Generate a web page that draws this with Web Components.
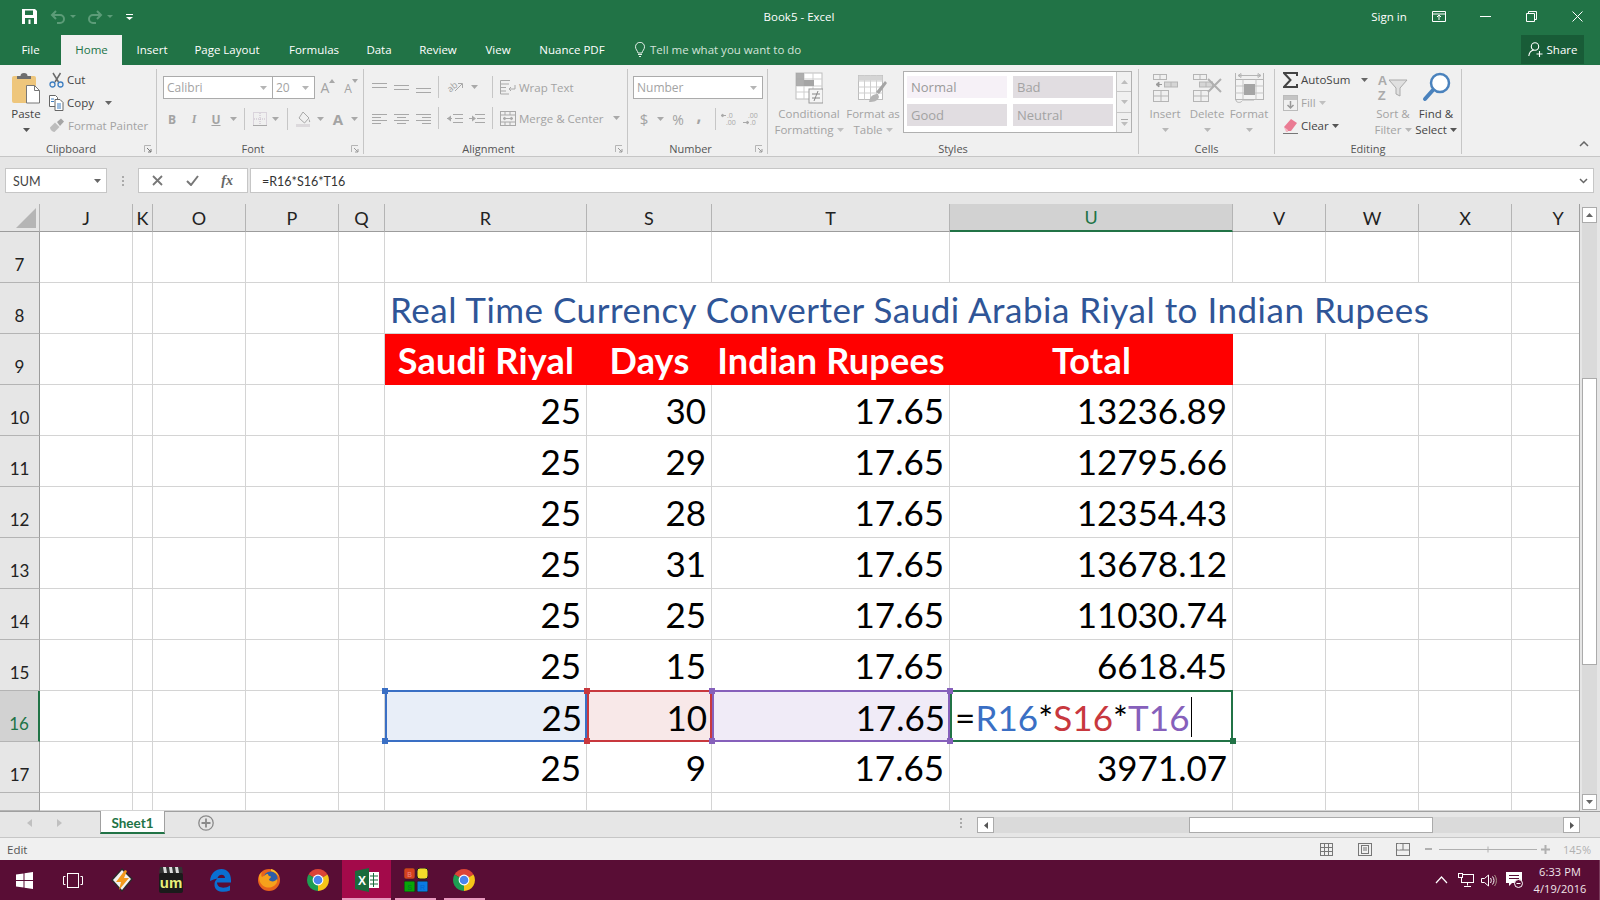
<!DOCTYPE html>
<html>
<head>
<meta charset="utf-8">
<title>Book5 - Excel</title>
<style>
  html, body { margin: 0; height: 100%; overflow: hidden; background: #fff; }
  body { font-family: "Open Sans", "Liberation Sans", sans-serif; }
</style>
</head>
<body>
<xl-app></xl-app>
<script>
const ic = (w, h, body) => `<svg width="${w}" height="${h}" viewBox="0 0 ${w} ${h}" fill="none" style="display:block">${body}</svg>`;
const car = (c = '#a9a9a9') => ic(7, 4, `<path d="M0 0h7L3.5 4z" fill="${c}"/>`);
const G = '#a8a8a8';

function shadow(el, html) {
    const template = document.createElement('template');
    template.innerHTML = html;
    el.attachShadow({ mode: 'open' }).appendChild(template.content.cloneNode(true));
}

class XlTitlebar extends HTMLElement {
    constructor() {
        super();
        shadow(this, `
        <style>
          :host { display: flex; height: 35px; box-sizing: border-box; padding-bottom: 2px; background: #217346; color: #fff; font-size: 11.500px; align-items: center; }
          .qat { display: flex; align-items: center; width: 400px; padding-left: 22px; box-sizing: border-box; flex: none; }
          .title { width: 798px; text-align: center; flex: none; }
          .right { display: flex; align-items: center; justify-content: flex-end; flex: 1; }
          .signin { width: 70px; margin-right: -8px; text-align: center; }
          .ctl { width: 46px; display: flex; justify-content: center; }
        </style>
        <div class="qat">
          ${ic(15, 15, '<path d="M0 0h13l2 2v13H0z" fill="#fff"/><rect x="3" y="1.5" width="8" height="4.5" fill="#217346"/><rect x="3" y="9" width="9" height="6" fill="#217346"/><rect x="6.5" y="10.5" width="2" height="4.5" fill="#fff"/>')}
          <span style="width:13px"></span>
          ${ic(16, 14, '<path d="M6 1L2 5l4 4M2 5h8a3.8 3.8 0 0 1 0 8H7" stroke="#5c9c78" stroke-width="2"/>')}
          <span style="width:4px"></span>${ic(6, 3, '<path d="M0 0h6L3 3z" fill="#5c9c78"/>')}
          <span style="width:11px"></span>
          ${ic(16, 14, '<path d="M10 1l4 4-4 4M14 5H6a3.8 3.8 0 0 0 0 8h3" stroke="#5c9c78" stroke-width="2"/>')}
          <span style="width:4px"></span>${ic(6, 3, '<path d="M0 0h6L3 3z" fill="#5c9c78"/>')}
          <span style="width:13px"></span>
          ${ic(7, 6, '<path d="M0 0h7v1H0zM0 3h7L3.5 6z" fill="#fff"/>')}
        </div>
        <div class="title">Book5 - Excel</div>
        <div class="right">
          <span class="signin">Sign in</span>
          <span class="ctl">${ic(14, 11, '<path d="M.5.5h13v10H.5zM.5 3h13M7 9V4.5M5 6l2-2 2 2" stroke="#fff"/>')}</span>
          <span class="ctl">${ic(11, 1, '<path d="M0 .5h11" stroke="#fff"/>')}</span>
          <span class="ctl">${ic(11, 11, '<path d="M.5 2.5h8v8h-8zM2.5 2.5v-2h8v8h-2" stroke="#fff"/>')}</span>
          <span class="ctl">${ic(11, 11, '<path d="M.5.5l10 10M10.5.5l-10 10" stroke="#fff"/>')}</span>
        </div>`);
    }
}

class XlTabs extends HTMLElement {
    constructor() {
        super();
        const tabs = [['File', 61], ['Home', 61, 1], ['Insert', 60], ['Page Layout', 90], ['Formulas', 84], ['Data', 46], ['Review', 72], ['View', 48], ['Nuance PDF', 100]];
        shadow(this, `
        <style>
          :host { display: flex; height: 30px; background: #217346; color: #fff; font-size: 11.500px; }
          .t { display: flex; align-items: center; justify-content: center; height: 30px; box-sizing: border-box; padding-bottom: 1px; }
          .on { background: #f0f0f0; color: #217346; }
          .tell { display: flex; align-items: center; gap: 5px; margin-left: 13px; padding-bottom: 2px; box-sizing: border-box; color: #d3e3da; flex: 1; }
          .share { width: 63px; height: 29px; background: #185c37; display: flex; align-items: center; justify-content: center; gap: 4px; margin-right: 16px; }
        </style>
        ${tabs.map(([n, w, on]) => `<div class="t ${on ? 'on' : ''}" style="width:${w}px">${n}</div>`).join('')}
        <div class="tell">
          ${ic(10, 15, '<path d="M3 11C2.500 8.500 .5 7.500 .5 4.800a4.500 4.500 0 0 1 9 0C9.500 7.500 7.500 8.500 7 11zM3 12.500h4M4 14.500h2" stroke="#e4eee8"/>')}
          <span>Tell me what you want to do</span>
        </div>
        <div class="share">
          ${ic(15, 15, '<circle cx="7" cy="4.500" r="3.700" stroke="#fff" stroke-width="1.100"/><path d="M.8 14c.4-3.500 2.500-5.500 5-6M11.500 9v6M8.500 12h6" stroke="#fff" stroke-width="1.100"/>')}
          <span>Share</span>
        </div>`);
    }
}

class XlGroup extends HTMLElement {
    constructor() {
        super();
        shadow(this, `
        <style>
          :host { display: flex; flex-direction: column; height: 85px; box-sizing: border-box; border-right: 1px solid #c6c6c6; flex: none; color: #444; }
          .body { height: 74px; display: flex; }
          .label { height: 11px; display: flex; align-items: center; justify-content: center; position: relative; color: #555; font-size: 11px; line-height: 11px; margin-left: var(--lm, 0); }
          .launch { position: absolute; right: 4px; top: 2px; }
          :host([launcher]) .label { padding-right: 14px; }
        </style>
        <div class="body"><slot></slot></div>
        <div class="label"><span id="l"></span><span class="launch" id="k"></span></div>`);
    }
    connectedCallback() {
        this.shadowRoot.querySelector('#l').textContent = this.getAttribute('label');
        if (this.hasAttribute('launcher')) {
            const c = this.getAttribute('launcher') || '#9a9a9a';
            this.shadowRoot.querySelector('#k').innerHTML = ic(8, 8, `<path d="M.5 7V.5H7" stroke="#b5b5b5"/><path d="M3 3l4 4M7 4v3H4" stroke="${c}"/>`);
        }
    }
}

class XlRibbon extends HTMLElement {
    constructor() {
        super();
        const i = (w, c = '', s = '') => `<span class="i" style="width:${w}px;${s}">${c}</span>`;
        const sep = (ml, mr) => `<span class="sep" style="margin:0 ${mr}px 0 ${ml}px"></span>`;
        const lines = (a) => ic(15, 13, a.map(([y, x1, x2]) => `<path d="M${x1} ${y}.5H${x2}" stroke="${G}"/>`).join(''));
        const big = (w, icon, l1, l2, dark) => `<div class="big ${dark ? 'dark' : ''}" style="width:${w}px"><span class="bi">${icon}</span><span class="tl">${l1}</span><span class="tl">${l2}</span></div>`;
        const tbl = '<rect x=".5" y=".5" width="13" height="5" stroke="#b5b5b5"/><path d="M7 .5v5" stroke="#b5b5b5"/>';
        shadow(this, `
        <style>
          :host { display: flex; height: 92px; box-sizing: border-box; padding-top: 4px; background: #f0f0f0; border-bottom: 1px solid #c6c6c6; font-size: 11.500px; color: #444; }
          .i { display: inline-flex; align-items: center; justify-content: center; flex: none; }
          .row { display: flex; align-items: center; }
          .col { display: flex; flex-direction: column; }
          .sm { height: 23px; display: flex; align-items: center; gap: 3px; white-space: nowrap; }
          .gr { color: #a3a3a3; }
          .drk { color: #444; }
          .sep { width: 1px; height: 22px; background: #c6c6c6; flex: none; }
          .box { background: #fff; border: 1px solid #ababab; height: 23px; box-sizing: border-box; display: flex; align-items: center; justify-content: space-between; padding: 0 5px 0 3px; color: #a3a3a3; font-size: 12px; flex: none; }
          .big { display: flex; flex-direction: column; align-items: center; color: #a3a3a3; flex: none; white-space: nowrap; }
          .big.dark { color: #444; }
          .bi { height: 37px; display: flex; align-items: center; justify-content: center; }
          .tl { height: 16px; line-height: 16px; display: flex; align-items: center; gap: 3px; }
          .gal { width: 229px; height: 62px; margin: 2px 0 0 7px; box-sizing: border-box; border: 1px solid #b0b0b0; background: #fff; display: flex; flex: none; }
          .cells { display: grid; grid-template-columns: 100px 100px; grid-template-rows: 22px 22px; gap: 6px; padding: 4px 3px; flex: 1; }
          .cells span { display: flex; align-items: center; padding-left: 4px; background: #e1dde1; color: #a3a3a3; font-size: 13px; }
          .cells span.n { background: #f6f1f7; color: #9a9a9a; }
          .gs { width: 15px; display: flex; flex-direction: column; background: #f0f0f0; border-left: 1px solid #c6c6c6; }
          .gs span { flex: 1; display: flex; align-items: center; justify-content: center; border-bottom: 1px solid #c6c6c6; }
          .gs span:last-child { border-bottom: 0; }
          .collapse { flex: 1; display: flex; align-items: flex-end; justify-content: flex-end; padding: 0 11px 6px 0; height: 84px; box-sizing: border-box; }
          .grow { display: flex; align-items: flex-start; color: #a3a3a3; }
          .az { display: flex; flex-direction: column; font-family: "Liberation Sans", sans-serif; font-weight: 700; font-size: 13px; line-height: 15px; color: #aaa; }
          .orient { display: flex; align-items: center; width: 18px; height: 15px; color: #a3a3a3; }
          .orient span { display: block; font-size: 9px; line-height: 10px; transform: rotate(-40deg); margin-right: -3px; }
        </style>

        <xl-group label="Clipboard" launcher="#777" style="width:157px">
          <div class="col" style="width:48px;align-items:center;padding-left:2px">
            <span style="height:36px;display:flex;align-items:center;margin-top:1px">${ic(30, 31, '<rect x="1" y="3" width="24" height="27" rx="2" fill="#eec67c"/><path d="M6 6V3h3.500a3.500 3 0 0 1 7 0H20v3z" fill="#6e6e6e"/><path d="M15.500 12.500h8l5 5v12.500h-13z" fill="#fff" stroke="#777"/><path d="M23.500 12.500v5h5" stroke="#777"/>')}</span>
            <span class="tl drk">Paste</span>
            <span class="tl">${car('#555')}</span>
          </div>
          <div class="col" style="margin:-1px 0 0 -1px">
            <div class="sm">${ic(15, 16, '<path d="M4 1l5.500 9M11.500 1L6 10" stroke="#6a6a6a" stroke-width="1.500"/><circle cx="3.500" cy="12.500" r="2.500" stroke="#3f7fc1" stroke-width="1.300"/><circle cx="11.500" cy="12.500" r="2.500" stroke="#3f7fc1" stroke-width="1.300"/>')}<span>Cut</span></div>
            <div class="sm">${ic(15, 16, '<path d="M.5.5h6l2 2v9H.5z" fill="#fff" stroke="#666"/><path d="M6 4.500h5l3 3v8H6z" fill="#fff" stroke="#666"/><path d="M2 4h3M2 6.500h3M8 9h4M8 11h4M8 13h4" stroke="#3f7fc1"/>')}<span>Copy</span><span style="margin-left:8px">${car('#666')}</span></div>
            <div class="sm gr">${ic(16, 15, '<path d="M1 9.500l5-5 4.500 4.500-5 5c-1 0-4-1-4.500-4.500z" fill="#bdbdbd"/><path d="M8 4l4-3.500 3 3L11 8z" fill="#a5a5a5"/>')}<span>Format Painter</span></div>
          </div>
        </xl-group>

        <xl-group label="Font" launcher style="width:207px">
          <div class="col" style="padding-top:7px">
            <div class="row" style="margin-left:6px">
              <span class="box" style="width:110px"><span>Calibri</span>${car('#b5b5b5')}</span>
              <span class="box" style="width:43px;margin-left:-1px"><span>20</span>${car('#b5b5b5')}</span>
              ${i(24, `<span class="grow"><span style="font-size:14px;line-height:18px">A</span>${ic(6, 4, `<path d="M0 4l3-4 3 4z" fill="${G}"/>`)}</span>`, 'margin-left:1px')}
              ${i(22, `<span class="grow"><span style="font-size:12px;line-height:16px;margin-top:2px">A</span>${ic(6, 4, `<path d="M0 0h6L3 4z" fill="${G}"/>`)}</span>`)}
            </div>
            <div class="row" style="margin-top:8px;height:24px;margin-left:4px">
              ${i(22, '<b style="color:#a3a3a3;font-size:12px">B</b>')}
              ${i(22, '<i style="color:#a3a3a3;font-size:12px;font-family:Liberation Serif;font-weight:700">I</i>')}
              ${i(22, '<u style="color:#a3a3a3;font-size:12px;font-weight:700">U</u>')}
              ${i(13, car())}${sep(4, 7)}
              ${i(16, ic(14, 14, `<rect x=".5" y=".5" width="13" height="13" stroke="#c4b9c8" stroke-dasharray="1 1"/><path d="M7 1v12M1 7h12" stroke="#c4b9c8" stroke-dasharray="1 1"/><path d="M0 13.500h14" stroke="${G}"/>`))}
              ${i(14, car())}${sep(5, 7)}
              ${i(17, ic(16, 16, `<path d="M7 1l6 6-4.500 5L3 7z" stroke="${G}"/><path d="M13 8c1 1.500 1.500 2.500 1 3s-1.500 0-1-3z" fill="${G}"/><rect y="13" width="14" height="3" fill="#dcd9dc"/>`))}
              ${i(14, car(), 'margin-left:1px')}
              ${i(18, `<span style="font-weight:700;color:#a3a3a3;font-size:15px;line-height:15px">A</span>`, 'margin-left:2px')}
              ${i(14, car())}
            </div>
          </div>
        </xl-group>

        <xl-group label="Alignment" launcher style="width:264px">
          <div class="col" style="padding:4px 0 0 8px">
            <div class="row" style="height:24px;margin-top:2px">
              ${i(15, lines([[2, 0, 15], [6, 0, 15]]))}<span style="width:7px"></span>
              ${i(15, lines([[4, 0, 15], [8, 0, 15]]))}<span style="width:7px"></span>
              ${i(15, lines([[7, 0, 15], [11, 0, 15]]))}${sep(7, 8)}
              <span class="orient"><span>ab</span>${ic(8, 10, `<path d="M0 9l7-7M3 1.500h4.500V6" stroke="${G}"/>`)}</span>
              ${i(14, car(), 'margin-left:2px')}<span class="sep" style="margin:0 7px 0 11px"></span>
              ${i(16, ic(16, 15, `<path d="M.5.5H10M.5 4H9M.5 7.500H6M.5 11H6M.5.500v13.500H9" stroke="${G}"/><path d="M15 5v4H9M11 7L9 9l2 2" stroke="${G}"/>`))}
              <span class="gr" style="margin-left:3px;white-space:nowrap">Wrap Text</span>
            </div>
            <div class="row" style="height:24px;margin-top:7px">
              ${i(15, lines([[2, 0, 15], [5, 0, 9], [8, 0, 15], [11, 0, 9]]))}<span style="width:7px"></span>
              ${i(15, lines([[2, 0, 15], [5, 3, 12], [8, 0, 15], [11, 3, 12]]))}<span style="width:7px"></span>
              ${i(15, lines([[2, 0, 15], [5, 6, 15], [8, 0, 15], [11, 6, 15]]))}${sep(7, 8)}
              ${i(16, ic(16, 13, `<path d="M6 2.500h10M8 6.500h8M6 10.500h10M0 6.500h5" stroke="${G}"/><path d="M0 6.500l4-3v6z" fill="${G}"/>`))}<span style="width:6px"></span>
              ${i(16, ic(16, 13, `<path d="M6 2.500h10M8 6.500h8M6 10.500h10M0 6.500h5" stroke="${G}"/><path d="M7 6.500l-4-3v6z" fill="${G}"/>`))}<span class="sep" style="margin:0 7px 0 7px"></span>
              ${i(16, ic(16, 15, `<rect x=".5" y=".5" width="15" height="14" stroke="${G}"/><path d="M.5 4h15M.5 11h15M5 .5V4M10 .5V4M5 11v3M10 11v3M3 7.500h10M3 7.500l2-1.500v3zM13 7.500l-2-1.500v3z" stroke="${G}"/>`))}
              <span class="gr" style="margin-left:3px;white-space:nowrap">Merge &amp; Center</span>
              ${i(12, car(), 'margin-left:7px')}
            </div>
          </div>
        </xl-group>

        <xl-group label="Number" launcher style="width:140px">
          <div class="col" style="padding:7px 0 0 5px">
            <span class="box" style="width:130px"><span>Number</span>${car('#b5b5b5')}</span>
            <div class="row" style="margin-top:8px;height:24px">
              ${i(18, '<span style="color:#a3a3a3;font-size:15px">$</span>', 'margin-left:2px')}
              ${i(14, car())}
              ${i(22, '<span style="color:#a3a3a3;font-size:14px">%</span>')}
              ${i(20, '<b style="color:#a3a3a3;font-size:17px;margin-top:-8px">,</b>')}
              ${sep(6, 5)}
              ${i(19, ic(19, 17, `<text x="6" y="7" font-size="7" font-family="Open Sans" fill="${G}">.0</text><text x="5" y="14" font-size="7" font-family="Open Sans" fill="${G}">.00</text><path d="M0 4.500h5M0 4.500l2-1.500v3z" stroke="${G}"/>`))}
              ${i(19, ic(19, 17, `<text x="6" y="7" font-size="7" font-family="Open Sans" fill="${G}">.00</text><text x="8" y="14" font-size="7" font-family="Open Sans" fill="${G}">.0</text><path d="M1 11.500h6M7 11.500l-2-1.500v3z" stroke="${G}"/>`), 'margin-left:2px')}
            </div>
          </div>
        </xl-group>

        <xl-group label="Styles" style="width:371px">
          ${big(82, ic(28, 32, `<rect x="1" y="1" width="26" height="26" fill="#fff" stroke="#bdbdbd"/><path d="M1 7h26M1 14h26M1 20h26M9 1v26M18 1v26" stroke="#cfcfcf"/><rect x="1" y="1" width="8" height="13" fill="#a5a5a5" opacity=".9"/><rect x="9" y="8" width="10" height="6" fill="#a5a5a5"/><rect x="14" y="17" width="14" height="14" fill="#f5f5f5" stroke="#9a9a9a"/><path d="M17 22h8M17 26h8M23 19l-4 10" stroke="#888"/>`), 'Conditional', `Formatting ${car('#c0c0c0')}`)}
          ${big(46, ic(30, 30, `<rect x=".5" y="2.500" width="24" height="24" fill="#fff" stroke="#bdbdbd"/><path d="M.5 8h24M.5 14h24M.5 20h24M6.500 2.500v24M12.500 2.500v24M18.500 2.500v24" stroke="#cfcfcf"/><rect x=".5" y="2.500" width="24" height="5" fill="#d5d5d5"/><path d="M18 19l9-11 2 2-8 11z" fill="#a5a5a5"/><path d="M11 29c1-6 4-8 9-8l1 3c-1 4-5 5-10 5z" fill="#b5b5b5"/>`), 'Format as', `Table ${car('#c0c0c0')}`)}
          <div class="gal">
            <div class="cells"><span class="n">Normal</span><span>Bad</span><span>Good</span><span>Neutral</span></div>
            <div class="gs">
              <span>${ic(7, 4, '<path d="M0 4h7L3.500 0z" fill="#bdbdbd"/>')}</span>
              <span>${ic(7, 4, '<path d="M0 0h7L3.500 4z" fill="#bdbdbd"/>')}</span>
              <span>${ic(7, 7, '<path d="M0 .5h7" stroke="#aaa"/><path d="M0 3h7L3.500 7z" fill="#bdbdbd"/>')}</span>
            </div>
          </div>
        </xl-group>

        <xl-group label="Cells" style="width:136px;padding-left:5px;--lm:-5px">
          ${big(42, ic(26, 30, `${'<g transform="translate(1 1)">' + tbl + '</g><g transform="translate(12 8.500)">' + tbl.replace(/stroke="#b5b5b5"/g, 'stroke="#b5b5b5" fill="#d5d5d5"') + '</g><g transform="translate(1 17)"><rect x=".5" y=".5" width="15" height="11" stroke="#b5b5b5"/><path d="M8 .5v11M.5 6h15" stroke="#b5b5b5"/></g><path d="M10 11.500H4M4 11.500l3-2.500v5z" fill="#999" stroke="#999"/>'}`), 'Insert', car('#b8b8b8'))}
          ${big(42, ic(31, 30, `${'<g transform="translate(1 1)">' + tbl + '</g><g transform="translate(7 8.500)">' + tbl.replace(/stroke="#b5b5b5"/g, 'stroke="#b5b5b5" fill="#d5d5d5"') + '</g><g transform="translate(1 17)"><rect x=".5" y=".5" width="15" height="11" stroke="#b5b5b5"/><path d="M8 .5v11M.5 6h15" stroke="#b5b5b5"/></g><path d="M16 6l13 13M29 6L16 19" stroke="#b0b0b0" stroke-width="2"/>'}`), 'Delete', car('#b8b8b8'))}
          ${big(42, ic(29, 32, `<path d="M.5 1v6M28.500 1v6M3 3.500h23M3 3.500l3-2v4zM26 3.500l-3-2v4z" stroke="#b5b5b5"/><rect x=".5" y="7.500" width="28" height="20" fill="#f4f4f4" stroke="#b5b5b5"/><path d="M8 7.500v20M21 7.500v20M.5 14h28M.5 21h28" stroke="#c5c5c5"/><rect x="9" y="12" width="11" height="11" fill="#a5a5a5"/><path d="M1 28c0 3 5 3 6 1M7 28l12 0" stroke="#b5b5b5"/>`), 'Format', car('#b8b8b8'))}
        </xl-group>

        <xl-group label="Editing" style="width:187px">
          <div class="col" style="width:97px;padding-left:8px;box-sizing:border-box;margin-top:-1px">
            <div class="sm">${ic(15, 16, '<path d="M14 4V1H1l6.500 7L1 15h13v-3" stroke="#444" stroke-width="2"/>')}<span>AutoSum</span><span style="margin-left:8px">${car('#666')}</span></div>
            <div class="sm gr">${ic(15, 16, `<rect x=".5" y=".5" width="14" height="15" stroke="#bbb"/><rect x="1" y="1" width="13" height="4" fill="#c4c4c4"/><path d="M7.500 6v7M4.500 10l3 3 3-3" stroke="#999" stroke-width="1.500"/>`)}<span>Fill</span>${car('#c0c0c0')}</div>
            <div class="sm">${ic(15, 16, '<path d="M1 9l7-8 6 4-6 8H4z" fill="#ea7b93"/><path d="M1 9l4 3v2H3z" fill="#f4b9c4"/><path d="M0 15.500h15" stroke="#777"/>')}<span>Clear</span>${car('#555')}</div>
          </div>
          ${big(42, `<span style="display:flex;align-items:center;gap:1px"><span class="az"><span>A</span><span>Z</span></span>${ic(20, 18, '<path d="M1 1h18l-7 8v8l-4-2V9z" fill="#e0e0e0" stroke="#aaa"/>')}</span>`, 'Sort &amp;', `Filter ${car('#b8b8b8')}`)}
          ${big(44, ic(29, 31, `<circle cx="18" cy="11" r="9" fill="#fff" stroke="#4a82bd" stroke-width="2.500"/><path d="M11 18l-8 9" stroke="#4a82bd" stroke-width="4" stroke-linecap="round"/>`), 'Find &amp;', `Select ${car('#555')}`, true)}
        </xl-group>

        <div class="collapse">${ic(10, 6, '<path d="M1 5l4-4 4 4" stroke="#666" stroke-width="1.500"/>')}</div>`);
    }
}

class XlFormulaBar extends HTMLElement {
    constructor() {
        super();
        shadow(this, `
        <style>
          :host { display: flex; height: 47px; box-sizing: border-box; padding: 11px 6px 11px 5px; background: #e6e6e6; font-family: Lato, sans-serif; font-size: 12.500px; color: #444; }
          .b { background: #fff; border: 1px solid #c6c6c6; box-sizing: border-box; height: 25px; padding-top: 1px; display: flex; align-items: center; flex: none; }
          .name { width: 102px; padding: 1px 5px 0 7px; justify-content: space-between; }
          .dots { width: 31px; display: flex; justify-content: center; align-items: center; }
          .fx { width: 110px; justify-content: space-between; padding: 0 14px 0 13px; }
          .in { flex: 1; margin-left: 2px; padding: 1px 5px 0 11px; justify-content: space-between; color: #333; }
          i { font-family: "Liberation Serif", serif; font-size: 14px; color: #666; font-weight: 700; }
        </style>
        <div class="b name"><span>SUM</span>${car('#666')}</div>
        <div class="dots">${ic(2, 10, '<path d="M0 0h2v2H0zM0 4h2v2H0zM0 8h2v2H0z" fill="#aaa"/>')}</div>
        <div class="b fx">
          ${ic(11, 11, '<path d="M1 1l9 9M10 1l-9 9" stroke="#777" stroke-width="1.800"/>')}
          ${ic(13, 11, '<path d="M1 6l4 4 7-9" stroke="#777" stroke-width="2"/>')}
          <i>fx</i>
        </div>
        <div class="b in"><span>=R16*S16*T16</span>${ic(9, 6, '<path d="M1 1l3.500 3.500L8 1" stroke="#666" stroke-width="1.500"/>')}</div>`);
    }
}

class XlSheet extends HTMLElement {
    constructor() {
        super();
        const cols = ['J', 'K', 'O', 'P', 'Q', 'R', 'S', 'T', 'U', 'V', 'W', 'X', 'Y'];
        const days = { 10: 30, 11: 29, 12: 28, 13: 31, 14: 25, 15: 15, 16: 10, 17: 9 };
        const totals = { 10: '13236.89', 11: '12795.66', 12: '12354.43', 13: '13678.12', 14: '11030.74', 15: '6618.45', 17: '3971.07' };
        const knob = (pos, color) => `<s class="k ${pos}" style="background:${color}"></s>`;
        let cells = '<div class="h corner">' + ic(20, 20, '<path d="M20 0v20H0z" fill="#b5b5b5"/>') + '</div>';
        cols.forEach(c => { cells += `<div class="h ${c === 'U' ? 'sel' : ''}">${c}</div>`; });
        for (let r = 7; r <= 18; r++) {
            cells += `<div class="rh ${r === 16 ? 'rsel' : ''}">${r === 18 ? '' : r}</div>`;
            if (r === 8) {
                cols.slice(0, 5).forEach(() => { cells += '<div class="c"></div>'; });
                cells += '<div class="c title" style="grid-column: span 7">Real Time Currency Converter Saudi Arabia Riyal to Indian Rupees</div><div class="c"></div>';
                continue;
            }
            cols.forEach(c => {
                if (r === 9 && 'RSTU'.includes(c)) {
                    const t = { R: 'Saudi Riyal', S: 'Days', T: 'Indian Rupees', U: 'Total' }[c];
                    cells += `<div class="c red">${t}</div>`;
                } else if (days[r] && c === 'R') {
                    cells += `<div class="c num ${r === 16 ? 'hl hr' : ''}">25${r === 16 ? knob('tl', '#3a6fc4') + knob('bl', '#3a6fc4') : ''}</div>`;
                } else if (days[r] && c === 'S') {
                    cells += `<div class="c num ${r === 16 ? 'hl hs' : ''}">${days[r]}${r === 16 ? knob('tl', '#c8383e') + knob('bl', '#c8383e') : ''}</div>`;
                } else if (days[r] && c === 'T') {
                    cells += `<div class="c num ${r === 16 ? 'hl ht' : ''}">17.65${r === 16 ? knob('tl', '#8660bb') + knob('bl', '#8660bb') + knob('tr', '#8660bb') + knob('br', '#8660bb') : ''}</div>`;
                } else if (days[r] && c === 'U') {
                    if (r === 16) {
                        cells += '<div class="c num hl edit"><span class="f"><span>=</span><span style="color:#3a6fc4">R16</span><span>*</span><span style="color:#c8383e">S16</span><span>*</span><span style="color:#8660bb">T16</span></span><span class="caret"></span>' + knob('br', '#217346') + '</div>';
                    } else {
                        cells += `<div class="c num">${totals[r]}</div>`;
                    }
                } else {
                    cells += '<div class="c"></div>';
                }
            });
        }
        shadow(this, `
        <style>
          :host { display: flex; height: 607px; background: #e6e6e6; }
          .grid { display: grid; width: 1580px; flex: none; grid-template-columns: 40px 93px 20px 93px 93px 46px 202px 125px 238px 283px 93px 93px 93px 93px; grid-template-rows: 28px repeat(11, 51px) 18px; font-family: Lato, sans-serif; overflow: hidden; border-right: 1px solid #a0a0a0; box-sizing: border-box; }
          .h { background: #e6e6e6; border-bottom: 1px solid #9c9c9c; border-right: 1px solid #b4b4b4; display: flex; align-items: center; justify-content: center; font-size: 18px; color: #222; box-sizing: border-box; }
          .corner { justify-content: flex-end; align-items: flex-start; padding: 4px 3px 0 0; }
          .sel { background: #d2d2d2; color: #217346; border-bottom: 2px solid #217346; }
          .rh { background: #e6e6e6; border-bottom: 1px solid #b4b4b4; border-right: 1px solid #9c9c9c; display: flex; align-items: flex-end; justify-content: center; box-sizing: border-box; font-size: 17px; line-height: 17px; padding-bottom: 9px; color: #222; }
          .rsel { color: #217346; background: #d2d2d2; border-right: 2px solid #217346; }
          .c { background: #fff; border-right: 1px solid #d4d4d4; border-bottom: 1px solid #d4d4d4; box-sizing: border-box; position: relative; white-space: nowrap; }
          .num { display: flex; align-items: flex-end; justify-content: flex-end; font-size: 35px; line-height: 35px; padding: 0 5px 7px 0; color: #000; }
          .title { display: flex; align-items: flex-end; padding: 0 0 6px 5px; font-size: 35px; line-height: 35px; color: #2f5597; letter-spacing: .5px; }
          .red { background: #f00; border: 0; color: #fff; font-size: 36px; line-height: 36px; letter-spacing: .2px; font-weight: 700; display: flex; align-items: flex-end; justify-content: center; padding-bottom: 7px; }
          .hl { border: 0; background: var(--f); }
          .hl::after { content: ""; position: absolute; inset: -1px 0 0 0; border: 2px solid var(--b); z-index: 1; pointer-events: none; }
          .hr { --b: #3a6fc4; --f: #e8eef8; }
          .hs { --b: #c8383e; --f: #f8e8e8; }
          .ht { --b: #8660bb; --f: #f0ebf7; }
          .edit { --b: #217346; --f: #fff; justify-content: flex-start; padding-left: 5px; }
          .f { display: flex; letter-spacing: .1px; }
          .caret { width: 1px; height: 40px; background: #000; align-self: flex-end; margin: 0 0 -2px 1px; }
          .k { position: absolute; width: 6px; height: 6px; z-index: 2; }
          .tl { left: -3px; top: -3px; } .bl { left: -3px; bottom: -2px; }
          .tr { right: -3px; top: -3px; } .br { right: -3px; bottom: -2px; }
          .sb { flex: 1; display: flex; flex-direction: column; padding: 3px 3px 1px 2px; }
          .btn { height: 14px; background: #fff; border: 1px solid #ababab; box-sizing: content-box; display: flex; align-items: center; justify-content: center; flex: none; }
          .track { flex: 1; background: #dadada; display: flex; flex-direction: column; }
          .thumb { height: 287px; margin-top: 155px; background: #fff; border: 1px solid #ababab; box-sizing: border-box; }
        </style>
        <div class="grid">${cells}</div>
        <div class="sb">
          <div class="btn">${ic(7, 4, '<path d="M0 4h7L3.500 0z" fill="#666"/>')}</div>
          <div class="track"><div class="thumb"></div></div>
          <div class="btn">${ic(7, 4, '<path d="M0 0h7L3.500 4z" fill="#666"/>')}</div>
        </div>`);
    }
}

class XlSheetTabs extends HTMLElement {
    constructor() {
        super();
        shadow(this, `
        <style>
          :host { display: flex; align-items: flex-start; height: 27px; box-sizing: border-box; background: #e6e6e6; border-top: 1px solid #a0a0a0; border-bottom: 1px solid #c6c6c6; font-family: Lato, sans-serif; }
          .nav { width: 100px; height: 22px; display: flex; align-items: center; padding-left: 27px; gap: 25px; box-sizing: border-box; }
          .tab { width: 65px; height: 23px; padding-top: 2px; box-sizing: border-box; background: #fff; border: 1px solid #a0a0a0; border-top: 0; border-bottom: 2px solid #217346; color: #217346; font-weight: 700; font-size: 13.500px; display: flex; align-items: center; justify-content: center; margin-top: -1px; }
          .add { width: 16px; height: 16px; margin: 3px 0 0 33px; }
          .dots { margin: 6px 0 0 746px; width: 6px; }
          .hs { display: flex; width: 603px; height: 16px; margin: 5px 0 0 11px; background: #dadada; }
          .b { width: 15px; height: 14px; background: #fff; border: 1px solid #ababab; display: flex; align-items: center; justify-content: center; flex: none; }
          .thumb { width: 242px; height: 14px; background: #fff; border: 1px solid #ababab; margin-left: 195px; flex: none; }
        </style>
        <div class="nav">
          ${ic(5, 8, '<path d="M5 0v8L0 4z" fill="#c0c0c0"/>')}
          ${ic(5, 8, '<path d="M0 0v8l5-4z" fill="#c0c0c0"/>')}
        </div>
        <div class="tab">Sheet1</div>
        <div class="add">${ic(16, 16, '<circle cx="8" cy="8" r="7.200" stroke="#8a8a8a" stroke-width="1.300"/><path d="M8 3.500v9M3.500 8h9" stroke="#8a8a8a" stroke-width="1.800"/>')}</div>
        <div class="dots">${ic(2, 10, '<path d="M0 0h2v2H0zM0 4h2v2H0zM0 8h2v2H0z" fill="#aaa"/>')}</div>
        <div class="hs">
          <span class="b">${ic(4, 7, '<path d="M4 0v7L0 3.500z" fill="#555"/>')}</span>
          <span class="thumb"></span>
          <span class="b" style="margin-left:auto">${ic(4, 7, '<path d="M0 0v7l4-3.500z" fill="#555"/>')}</span>
        </div>`);
    }
}

class XlStatus extends HTMLElement {
    constructor() {
        super();
        shadow(this, `
        <style>
          :host { display: flex; align-items: center; height: 22px; background: #f0f0f0; font-size: 11.500px; color: #555; padding-left: 7px; box-sizing: border-box; }
          .v { display: flex; align-items: center; margin-left: auto; padding-right: 9px; }
          .g { color: #b0b0b0; margin-left: 13px; font-size: 11px; }
        </style>
        <span>Edit</span>
        <div class="v">
          ${ic(13, 13, '<rect x=".5" y=".5" width="12" height="12" stroke="#777"/><path d="M4.500 .5v12M8.500 .5v12M.5 4.500h12M.5 8.500h12" stroke="#777"/>')}
          <span style="width:25px"></span>
          ${ic(14, 13, '<rect x=".5" y=".5" width="13" height="12" stroke="#777"/><rect x="3.500" y="2.500" width="7" height="8" stroke="#777"/><path d="M5 5h4M5 7h4" stroke="#777"/>')}
          <span style="width:24px"></span>
          ${ic(14, 13, '<rect x=".5" y=".5" width="13" height="12" stroke="#777"/><path d="M7 .5v6.500H.5M7 7h6.500" stroke="#777"/><path d="M3 .5v6.500" stroke="#eee"/>')}
          <span style="width:15px"></span>
          ${ic(7, 2, '<path d="M0 0h7v2H0z" fill="#b0b0b0"/>')}
          <span style="width:7px"></span>
          ${ic(98, 7, '<path d="M0 3.500h98" stroke="#b0b0b0"/><path d="M49 .5v6" stroke="#b0b0b0"/>')}
          <span style="width:4px"></span>
          ${ic(9, 9, '<path d="M4.500 0v9M0 4.500h9" stroke="#b0b0b0" stroke-width="2"/>')}
          <span class="g">145%</span>
        </div>`);
    }
}

class WinTaskbar extends HTMLElement {
    constructor() {
        super();
        const chrome = ic(24, 24, '<path d="M12 12L2.500 6.500A11 11 0 0 1 21.500 6.500z" fill="#dc4437"/><path d="M12 12L21.500 6.500A11 11 0 0 1 12 23z" fill="#f5c518"/><path d="M12 12L12 23A11 11 0 0 1 2.500 6.500z" fill="#1e9e52"/><circle cx="12" cy="12" r="5.400" fill="#fff"/><circle cx="12" cy="12" r="4.300" fill="#4a85ee"/>');
        const slots = [
            ic(17, 17, '<path d="M0 2.500L7.500 1.500v6.500H0zM8.500 1.300L17 0v8H8.500zM0 9h7.500v6.500L0 14.500zM8.500 9H17v8l-8.500-1.300z" fill="#fff"/>'),
            ic(20, 15, '<rect x="4.500" y=".5" width="11" height="14" stroke="#fff"/><path d="M2.500 3.500H.5v8h2M17.500 3.500h2v8h-2" stroke="#fff"/>'),
            ic(22, 24, '<path d="M11 0l11 11-11 13L0 12z" fill="#2b2b2b"/><path d="M11 2l9 9-9 11-9-10z" fill="#f2f2f2"/><path d="M14 2L5 14h5l-2 8 10-12h-5l3-7z" fill="#f39a1d"/>'),
            ic(24, 26, '<rect y="6" width="24" height="20" rx="2" fill="#1b1b1b"/><path d="M1 0h22l1 6H0z" fill="#333"/><path d="M4 0h3l1 6H5zM10 0h3l1 6h-3zM16 0h3l1 6h-3z" fill="#ddd"/><text x="12" y="21" text-anchor="middle" font-family="Liberation Sans" font-size="15" font-weight="700" fill="#e9f07a">um</text>'),
            ic(22, 24, '<path d="M1 13C1.500 5 7 1 12.500 1 18 1 22 5 22 12.500v2H8c.3 6 8 6.500 13 3v5c-7 3-15.500 1-15.500-5.500 0-3 .5-4.500 3-6.500-2.500.5-5 1.500-7.500 2.500zM8.500 10h7.500c0-4.500-6.500-4.500-7.500 0z" fill="#0a6fd1"/>'),
            ic(24, 24, '<circle cx="12" cy="12" r="11" fill="#e9641c"/><circle cx="13.500" cy="10.500" r="7" fill="#2d5ea8"/><path d="M2 9c0 9 8 12 13 10 4-1.500 6-5 5-8-2 3-6 3-8 1 0-1.500 2-2 2-3.500-2 0-3-1-3-2.500C8 6 8 8 5 9 4 8 4 6 5 4 3 5.500 2 7 2 9z" fill="#f6a11c"/><path d="M14 1c4 1 7 4 8 8-2-3-4-5-8-6z" fill="#f7c52b"/>'),
            chrome,
            ic(24, 24, '<path d="M0 3l14-3v24L0 21z" fill="#1a6b3c"/><path d="M14 4h10v16H14z" fill="#fff"/><path d="M15 8h8M15 12h8M15 16h8M18.500 5v14" stroke="#1a6b3c"/><text x="7" y="16.500" text-anchor="middle" font-family="Liberation Sans" font-size="12" font-weight="700" fill="#fff">X</text>'),
            ic(24, 24, '<rect x="0" y="0" width="11" height="11" rx="2" fill="#d5411f" stroke="#222" stroke-width=".5"/><rect x="13" y="0" width="11" height="11" rx="3" fill="#f4dd2a" stroke="#222"/><rect x="0" y="13" width="11" height="11" rx="1" fill="#07a707" stroke="#222"/><rect x="13" y="13" width="11" height="11" rx="1" fill="#0b7be2" stroke="#222"/><text x="5.500" y="8.500" text-anchor="middle" font-size="7" font-family="Liberation Sans" fill="#e88">B</text><text x="5.500" y="21.500" text-anchor="middle" font-size="7" font-family="Liberation Sans" fill="#073">S</text><text x="18.500" y="21.500" text-anchor="middle" font-size="7" font-family="Liberation Sans" fill="#06c">R</text>'),
            chrome
        ];
        shadow(this, `
        <style>
          :host { display: flex; height: 40px; background: #590d35; color: #f0e6eb; font-size: 11px; }
          .s { width: 48.900px; height: 40px; display: flex; align-items: center; justify-content: center; position: relative; flex: none; box-sizing: border-box; }
          .open::after { content: ""; position: absolute; left: 4px; right: 4px; bottom: 0; height: 2px; background: #e89abf; }
          .on { background: #a30a4a; }
          .on::after { left: 0; right: 0; }
          .tray { margin-left: auto; display: flex; align-items: center; padding-right: 3px; border-right: 1px solid #7a3a5b; }
          .clock { width: 68px; margin-left: 3px; text-align: center; line-height: 17px; margin-right: 2px; padding-bottom: 1px; letter-spacing: .1px; }
        </style>
        ${slots.map((s, i) => `<div class="s ${i === 7 ? 'on open' : i > 7 ? 'open' : ''}">${s}</div>`).join('')}
        <div class="tray">
          ${ic(13, 8, '<path d="M1 7l5.500-6L12 7" stroke="#fff" stroke-width="1.200"/>')}
          <span style="width:10px"></span>
          ${ic(16, 14, '<rect x="3.500" y="1.500" width="12" height="8" stroke="#fff"/><path d="M9.500 9.500v3M6 13.500h7" stroke="#fff"/><rect x=".5" y=".5" width="4" height="4" fill="#590d35" stroke="#fff"/>')}
          <span style="width:7px"></span>
          ${ic(16, 13, '<path d="M.5 4.500h3l4-3.500v11l-4-3.500h-3zM9.500 4c1 1.500 1 3.500 0 5M11.500 2.500c2 2.500 2 5.500 0 8" stroke="#fff"/><path d="M13.500 1c2.500 3 2.500 8 0 11" stroke="#a98"/>')}
          <span style="width:9px"></span>
          ${ic(17, 16, '<path d="M0 0h16v11H6l-3 3v-3H0z" fill="#fff"/><path d="M3 3.500h10M3 6.500h10" stroke="#590d35"/><circle cx="12.500" cy="11.500" r="4" fill="#590d35" stroke="#fff"/><path d="M10.500 11.500h4" stroke="#fff"/>')}
          <div class="clock">6:33 PM<br>4/19/2016</div>
        </div>`);
    }
}

class XlApp extends HTMLElement {
    constructor() {
        super();
        shadow(this, `
        <style>
          :host { display: flex; flex-direction: column; height: 900px; width: 1600px; }
        </style>
        <xl-titlebar></xl-titlebar>
        <xl-tabs></xl-tabs>
        <xl-ribbon></xl-ribbon>
        <xl-formula-bar></xl-formula-bar>
        <xl-sheet></xl-sheet>
        <xl-sheet-tabs></xl-sheet-tabs>
        <xl-status></xl-status>
        <win-taskbar></win-taskbar>`);
    }
}

customElements.define('xl-titlebar', XlTitlebar);
customElements.define('xl-tabs', XlTabs);
customElements.define('xl-group', XlGroup);
customElements.define('xl-ribbon', XlRibbon);
customElements.define('xl-formula-bar', XlFormulaBar);
customElements.define('xl-sheet', XlSheet);
customElements.define('xl-sheet-tabs', XlSheetTabs);
customElements.define('xl-status', XlStatus);
customElements.define('win-taskbar', WinTaskbar);
customElements.define('xl-app', XlApp);
</script>
</body>
</html>
